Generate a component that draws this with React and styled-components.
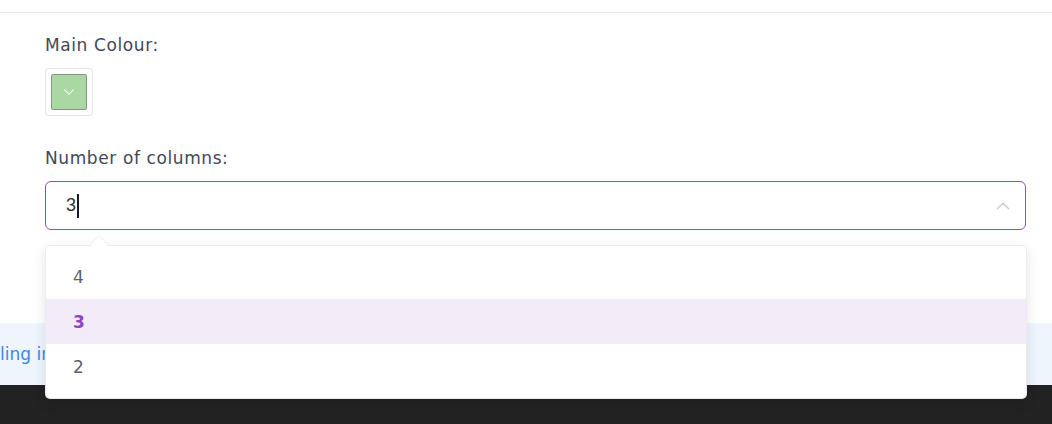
import React from 'react'
import styled, { createGlobalStyle } from 'styled-components'

const GlobalStyle = createGlobalStyle`
  html, body {
    margin: 0;
    padding: 0;
    background: #ffffff;
  }
  body {
    font-family: "DejaVu Sans", "Open Sans", sans-serif;
  }
`

const Page = styled.div`
  width: 1052px;
  height: 424px;
  overflow: hidden;
  display: flex;
  flex-direction: column;
  position: relative;
`

const Settings = styled.div`
  border-top: 1px solid #e6e6e6;
  margin-top: 12px;
  padding: 21px 26px 0 45px;
  display: flex;
  flex-direction: column;
  height: 310px;
  box-sizing: border-box;
`

const Label = styled.div`
  font-size: 17px;
  letter-spacing: 0.6px;
  color: #434856;
  line-height: 22px;
  margin-bottom: 12px;
`

const SwatchBox = styled.button`
  width: 48px;
  height: 48px;
  padding: 0;
  border: 1px solid #e5e5e5;
  border-radius: 4px;
  background: #fff;
  display: flex;
  align-items: center;
  justify-content: center;
  margin-bottom: 31px;
`

const Swatch = styled.div`
  width: 36px;
  height: 36px;
  box-sizing: border-box;
  background: ${p => p.$color};
  border: 1px solid #8f8f8f;
  border-radius: 2px;
  display: flex;
  align-items: center;
  justify-content: center;
`

const SelectWrap = styled.div`
  position: relative;
`

const SelectBox = styled.div`
  height: 49px;
  box-sizing: border-box;
  border: 1px solid #8e4fd0;
  border-radius: 6px;
  display: flex;
  align-items: center;
  justify-content: space-between;
  padding: 0 14px 0 20px;
`

const Value = styled.span`
  font-family: "Liberation Sans", Arial, sans-serif;
  font-size: 18px;
  color: #333;
  display: flex;
  align-items: center;
`

const Caret = styled.span`
  display: inline-block;
  width: 2px;
  height: 24px;
  background: #1a1a2e;
  margin-left: 1px;
`

const Menu = styled.ul`
  position: absolute;
  top: 65px;
  left: 1px;
  right: 0;
  margin: 0;
  padding: 8px 0 9px;
  list-style: none;
  background: #fff;
  border-radius: 4px;
  box-shadow: 0 0 0 1px #ececf0, 0 4px 14px rgba(0, 0, 0, 0.12);
  z-index: 2;

  &::before {
    content: '';
    position: absolute;
    top: -7px;
    left: 47px;
    width: 12px;
    height: 12px;
    background: #fff;
    transform: rotate(45deg);
    box-shadow: -1px -1px 2px rgba(0, 0, 0, 0.05);
  }
`

const Option = styled.li`
  height: 45px;
  display: flex;
  align-items: center;
  padding-left: 27px;
  font-size: 17px;
  position: relative;
  color: ${p => (p.$active ? '#8e44c4' : '#5f6268')};
  font-weight: ${p => (p.$active ? 700 : 400)};
  background: ${p => (p.$active ? '#f3ebf7' : 'transparent')};
`

const Notice = styled.div`
  height: 62px;
  margin-top: 1px;
  background: #eef5fd;
  display: flex;
  align-items: center;
  font-size: 17px;
  color: #3f86ea;
  white-space: nowrap;
`

const Footer = styled.div`
  flex: 1;
  background: #222222;
`

const Chevron = ({ up, color, size = 14 }) => (
  <svg width={size} height={size} viewBox="0 0 14 14" fill="none">
    <path
      d={up ? 'M2 9.5 L7 4.5 L12 9.5' : 'M2 4.5 L7 9.5 L12 4.5'}
      stroke={color}
      strokeWidth="1.2"
      strokeLinecap="round"
      strokeLinejoin="round"
    />
  </svg>
)

const options = ['4', '3', '2']

export default function App() {
  return (
    <Page>
      <GlobalStyle />
      <Settings>
        <Label>Main Colour:</Label>
        <SwatchBox>
          <Swatch $color="#a9d8a2">
            <Chevron color="#ffffff" size={12} />
          </Swatch>
        </SwatchBox>
        <Label>Number of columns:</Label>
        <SelectWrap>
          <SelectBox>
            <Value>
              3<Caret />
            </Value>
            <Chevron up color="#c9cbd1" size={16} />
          </SelectBox>
          <Menu>
            {options.map(o => (
              <Option key={o} $active={o === '3'}>
                {o}
              </Option>
            ))}
          </Menu>
        </SelectWrap>
      </Settings>
      <Notice>ling in</Notice>
      <Footer />
    </Page>
  )
}
